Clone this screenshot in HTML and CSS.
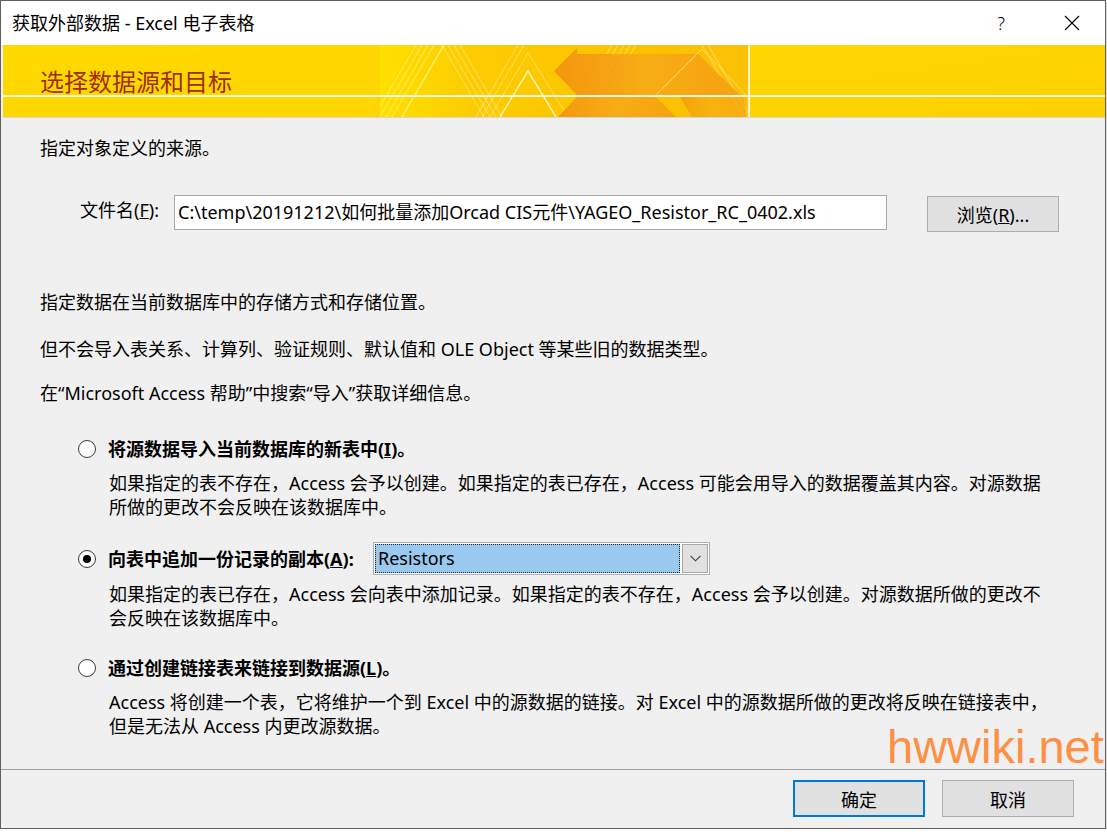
FILE: index.html
```html
<!DOCTYPE html>
<html lang="zh-CN">
<head>
<meta charset="utf-8">
<title>获取外部数据 - Excel 电子表格</title>
<link rel="stylesheet" href="styles.css">
</head>
<body>
<div class="window">
  <div class="titlebar">
    <span class="title">获取外部数据 - Excel 电子表格</span>
    <div class="tb-buttons">
      <span class="tb-btn help">?</span>
      <span class="tb-btn close">
        <svg width="16" height="16" viewBox="0 0 16 16"><path d="M1 1 L15 15 M15 1 L1 15" stroke="#000" stroke-width="1.1" fill="none"/></svg>
      </span>
    </div>
  </div>

  <div class="banner">
    <svg class="banner-art" width="368" height="72" viewBox="0 0 368 72">
      <defs>
        <linearGradient id="bg" x1="0" x2="1" y1="0" y2="0">
          <stop offset="0" stop-color="#ffe000"/>
          <stop offset="0.25" stop-color="#fdcc00"/>
          <stop offset="0.7" stop-color="#fcc200"/>
          <stop offset="1" stop-color="#fbc106"/>
        </linearGradient>
        <linearGradient id="or" x1="0" x2="1" y1="0" y2="0">
          <stop offset="0" stop-color="#f28d10"/>
          <stop offset="0.5" stop-color="#f7a918"/>
          <stop offset="1" stop-color="#f59c12"/>
        </linearGradient>
      </defs>
      <rect width="368" height="72" fill="url(#bg)"/>
      <g stroke="rgba(255,255,255,0.4)" stroke-width="1" fill="none">
        <path d="M-6 72 L36 0 M0 72 L42 0 M6 72 L48 0 M12 72 L54 0"/>
        <path d="M62 0 L104 72 M68 0 L110 72 M74 0 L116 72 M80 0 L122 72"/>
        <path d="M96 72 L138 0 M102 72 L144 0"/>
        <path d="M110 72 L148 8 L188 72"/>
        <path d="M190 72 L232 0 M196 72 L238 0 M202 72 L244 0 M208 72 L250 0 M214 72 L256 0"/>
        <path d="M322 0 L364 72 M328 0 L368 68"/>
      </g>
      <path d="M22 72 L64 0" stroke="rgba(255,240,120,0.9)" stroke-width="1.5"/>
      <polygon points="174,26 197,3 197,9 318,9 360,50 197,50" fill="url(#or)" opacity="0.85"/>
      <polygon points="178,72 197,52 276,52 296,72" fill="url(#or)" opacity="0.85"/>
      <polygon points="300,52 364,52 366,72 312,72" fill="url(#or)" opacity="0.6"/>
      <path d="M276 50 L322 4 L366 50" stroke="rgba(255,230,140,0.7)" stroke-width="1" fill="none"/>
      <path d="M120 72 L148 26 L176 72" stroke="rgba(255,255,220,0.8)" stroke-width="1.5" fill="none"/>
    </svg>
    <div class="banner-hline"></div>
    <div class="banner-vline"></div>
    <h1 class="banner-title">选择数据源和目标</h1>
  </div>

  <div class="content">
    <p class="para intro">指定对象定义的来源。</p>

    <div class="file-row">
      <span class="file-label">文件名(<u>F</u>):</span>
      <div class="file-input">C:\temp\20191212\如何批量添加Orcad CIS元件\YAGEO_Resistor_RC_0402.xls</div>
      <button class="btn browse">浏览(<u>R</u>)...</button>
    </div>

    <p class="para p2">指定数据在当前数据库中的存储方式和存储位置。</p>
    <p class="para p3">但不会导入表关系、计算列、验证规则、默认值和 OLE Object 等某些旧的数据类型。</p>
    <p class="para p4">在“Microsoft Access 帮助”中搜索“导入”获取详细信息。</p>

    <div class="options">
      <div class="option opt1">
        <div class="opt-head">
          <span class="radio"></span>
          <span class="opt-label">将源数据导入当前数据库的新表中(<u>I</u>)。</span>
        </div>
        <p class="opt-desc">如果指定的表不存在，Access 会予以创建。如果指定的表已存在，Access 可能会用导入的数据覆盖其内容。对源数据<br>所做的更改不会反映在该数据库中。</p>
      </div>

      <div class="option opt2">
        <div class="opt-head combo-head">
          <span class="radio checked"></span>
          <span class="opt-label fixed">向表中追加一份记录的副本(<u>A</u>):</span>
          <div class="combo">
            <div class="combo-value">Resistors</div>
            <div class="combo-arrow">
              <svg width="11" height="7" viewBox="0 0 11 7"><polyline points="0.5,0.8 5.5,5.8 10.5,0.8" fill="none" stroke="#3c3c3c" stroke-width="1.1"/></svg>
            </div>
          </div>
        </div>
        <p class="opt-desc">如果指定的表已存在，Access 会向表中添加记录。如果指定的表不存在，Access 会予以创建。对源数据所做的更改不<br>会反映在该数据库中。</p>
      </div>

      <div class="option opt3">
        <div class="opt-head">
          <span class="radio"></span>
          <span class="opt-label">通过创建链接表来链接到数据源(<u>L</u>)。</span>
        </div>
        <p class="opt-desc">Access 将创建一个表，它将维护一个到 Excel 中的源数据的链接。对 Excel 中的源数据所做的更改将反映在链接表中，<br>但是无法从 Access 内更改源数据。</p>
      </div>
    </div>
  </div>

  <div class="footer">
    <button class="btn ok">确定</button>
    <button class="btn cancel">取消</button>
  </div>

  <div class="watermark">hwwiki.net</div>
</div>
</body>
</html>
```

FILE: styles.css
```css
* {
  box-sizing: border-box;
}

html, body {
  margin: 0;
  padding: 0;
  background: #ffffff;
}

body {
  font-family: "Noto Sans", "Noto Sans CJK SC", sans-serif;
  font-size: 18px;
  color: #000;
}

.window {
  position: relative;
  width: 1106px;
  height: 829px;
  border: 1px solid #606060;
  background: #f0f0f0;
  display: flex;
  flex-direction: column;
  box-shadow: 0 2px 3px rgba(0, 0, 0, 0.35);
}

/* title bar */
.titlebar {
  height: 44px;
  flex: none;
  background: #fff;
  display: flex;
  align-items: center;
  padding-left: 11px;
}

.title {
  font-size: 18px;
  line-height: 24px;
}

.tb-buttons {
  margin-left: auto;
  display: flex;
  align-items: center;
  padding-right: 10px;
}

.tb-btn {
  width: 46px;
  height: 30px;
  display: flex;
  align-items: center;
  justify-content: center;
}

.help {
  margin-right: 25px;
  font-size: 18px;
  font-weight: 300;
}

/* banner */
.banner {
  position: relative;
  flex: none;
  height: 73px;
  margin-left: 2px;
  background: linear-gradient(172deg, #ffd900 0%, #fed500 60%, #fdd100 100%);
  border-bottom: 1px solid #d6d6d6;
  overflow: hidden;
}

.banner-art {
  position: absolute;
  left: 377px;
  top: 0;
}

.banner-hline {
  position: absolute;
  left: 0;
  right: 0;
  top: 50px;
  height: 2px;
  background: #fff8dc;
}

.banner-vline {
  position: absolute;
  left: 745px;
  top: 0;
  bottom: 0;
  width: 2px;
  background: #fff6d0;
}

.banner-title {
  position: relative;
  margin: 0;
  padding: 25px 0 0 37px;
  font-size: 24px;
  line-height: 24px;
  font-weight: 400;
  color: #a02e00;
}

/* content */
.content {
  flex: 1;
  padding-left: 39px;
}

.para {
  margin: 0;
  line-height: 24px;
}

.intro { margin-top: 18px; }
.p2 { margin-top: 58px; }
.p3 { margin-top: 23px; }
.p4 { margin-top: 20px; }

.file-row {
  display: flex;
  align-items: flex-start;
  margin-top: 35px;
}

.file-label {
  margin: 3px 0 0 40px;
  width: 94px;
  line-height: 24px;
  white-space: nowrap;
}

.file-input {
  width: 713px;
  height: 35px;
  border: 1px solid #a8a8a8;
  background: #fff;
  padding-left: 3px;
  line-height: 33px;
  white-space: nowrap;
  overflow: hidden;
}

.btn {
  font: inherit;
  color: #000;
  background: #e1e1e1;
  border: 1px solid #adadad;
  padding: 0;
  margin: 0;
}

.browse {
  margin: 1px 0 0 40px;
  width: 132px;
  height: 36px;
}

/* options */
.options {
  margin-left: 38px;
}

.opt-head {
  display: flex;
  align-items: center;
  height: 24px;
}

.opt1 .opt-head { margin-top: 32px; }
.opt2 .opt-head { margin-top: 23px; height: 33px; }
.opt3 .opt-head { margin-top: 26px; }

.radio {
  position: relative;
  flex: none;
  width: 18px;
  height: 18px;
  border-radius: 50%;
  border: 1px solid #3a3a3a;
  background: #fff;
  margin-right: 12px;
}

.radio.checked::after {
  content: "";
  position: absolute;
  left: 4px;
  top: 4px;
  width: 8px;
  height: 8px;
  border-radius: 50%;
  background: #000;
}

.opt-label {
  font-weight: 700;
  line-height: 24px;
  white-space: nowrap;
}

.opt-label.fixed {
  width: 265px;
}

.opt-desc {
  margin: 10px 0 0 31px;
  line-height: 24px;
  white-space: nowrap;
}

.opt2 .opt-desc { margin-top: 7px; }

.combo {
  width: 337px;
  height: 33px;
  border: 1px solid #a9b1be;
  padding: 1px;
  background: #fff;
  display: flex;
}

.combo-value {
  flex: 1;
  background: #99c9ef;
  border: 1px dotted #222;
  padding-left: 2px;
  line-height: 27px;
  margin-right: 2px;
}

.combo-arrow {
  width: 26px;
  background: #e1e1e1;
  border: 1px solid #a8a8a8;
  display: flex;
  align-items: center;
  justify-content: center;
}

/* footer */
.footer {
  flex: none;
  height: 59px;
  border-top: 1px solid #a0a0a0;
  display: flex;
  justify-content: flex-end;
  align-items: flex-start;
  gap: 17px;
  padding: 10px 31px 0 0;
}

.footer .btn {
  width: 132px;
  height: 37px;
}

.footer .ok {
  border: 2px solid #0078d7;
}

/* watermark overlay */
.watermark {
  position: absolute;
  left: 886px;
  top: 722px;
  font-family: "Liberation Sans", Arial, sans-serif;
  font-size: 47px;
  line-height: 47px;
  color: #ff8a3a;
  opacity: 0.95;
}
```
